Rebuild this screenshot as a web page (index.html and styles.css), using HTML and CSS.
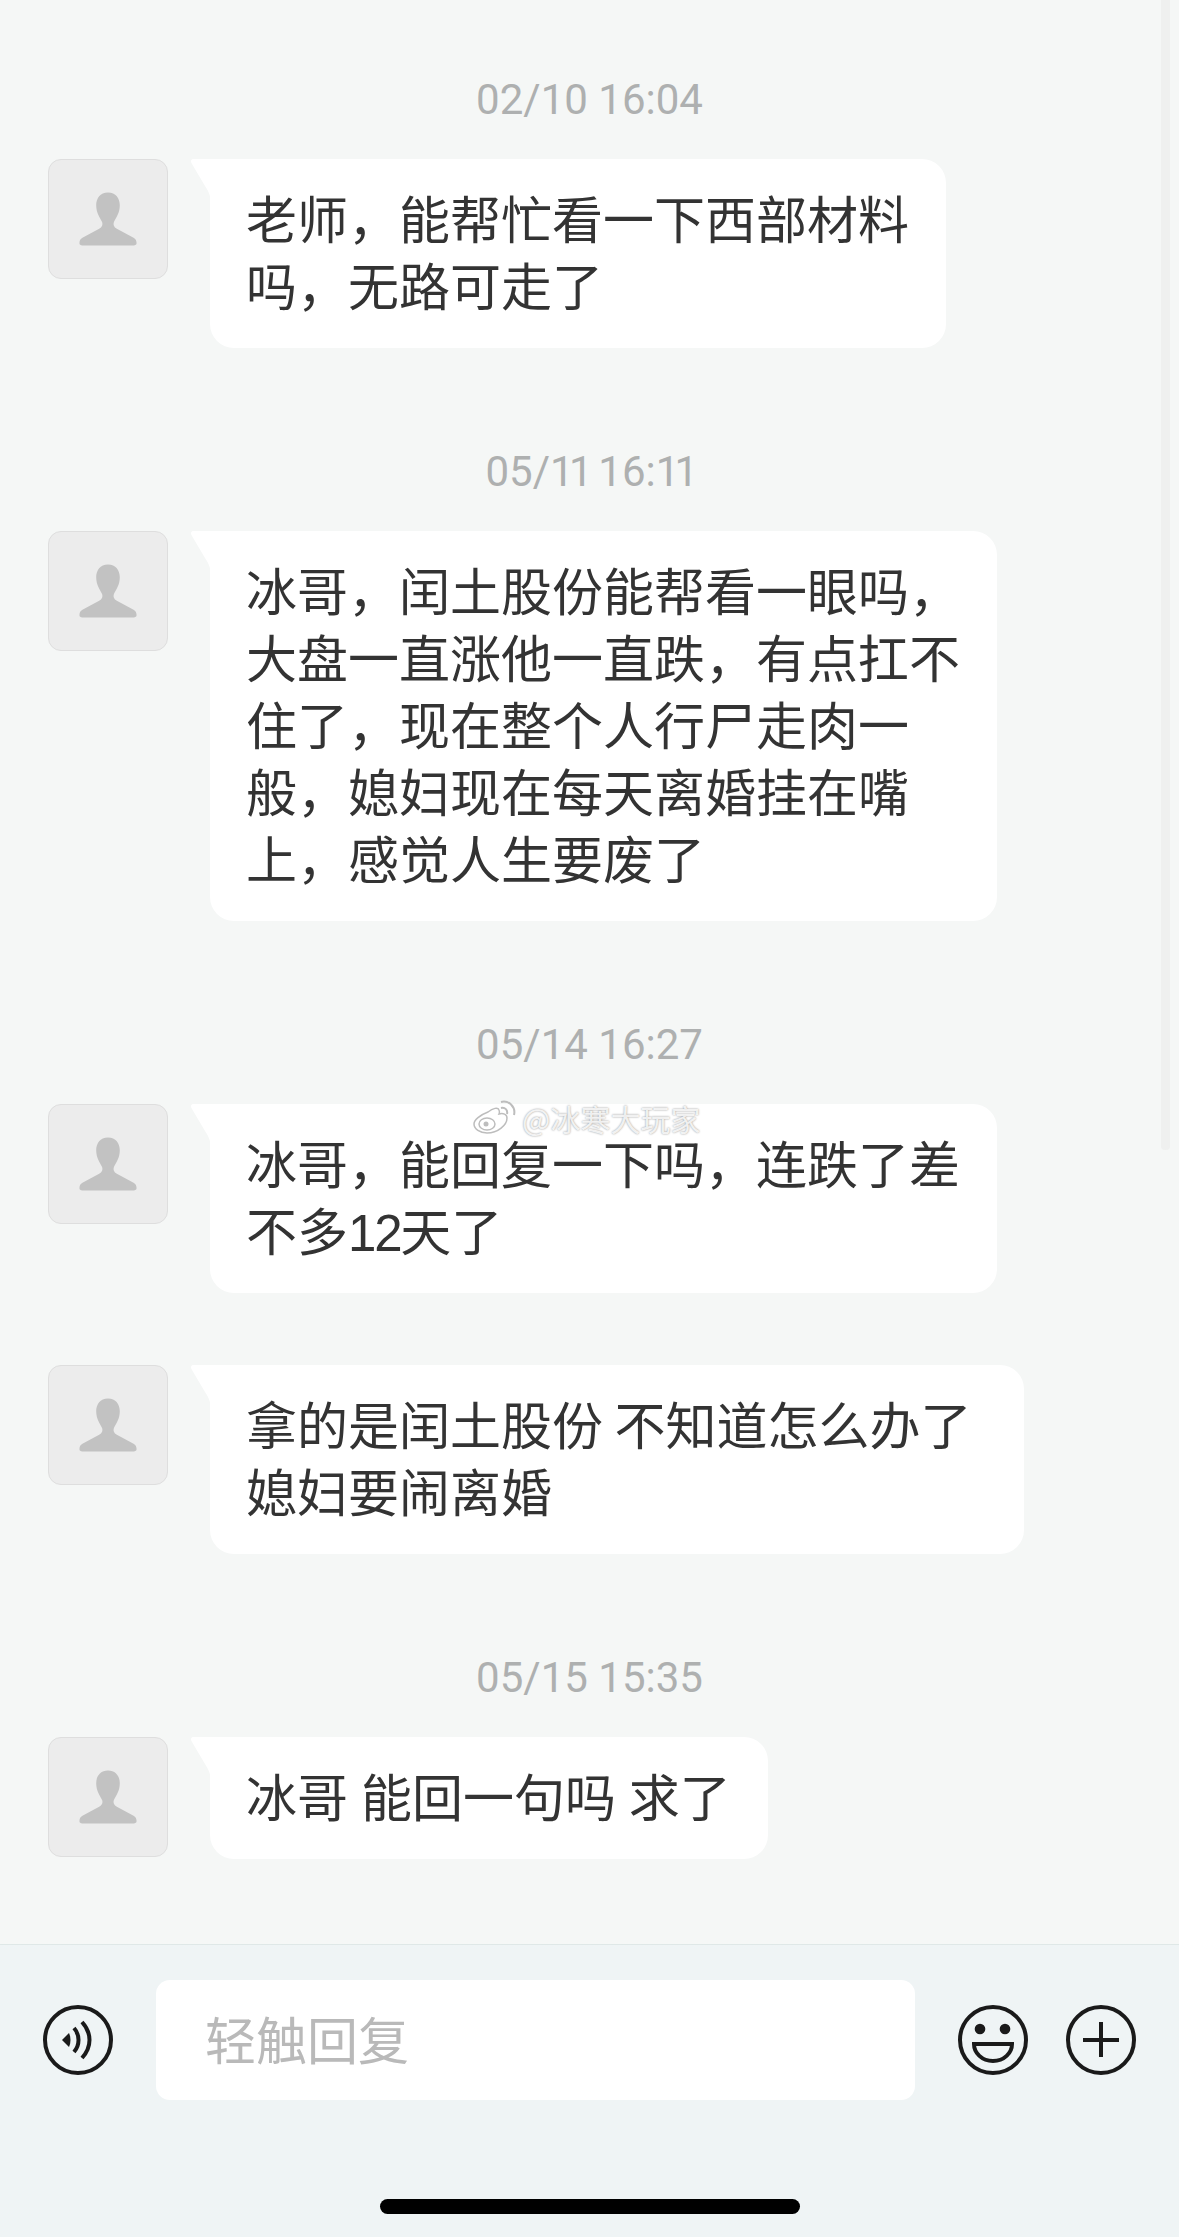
FILE: index.html
```html
<!DOCTYPE html>
<html lang="zh-CN">
<head>
<meta charset="UTF-8">
<meta name="viewport" content="width=device-width, initial-scale=1.0">
<title>私信</title>
<link rel="stylesheet" href="styles.css">
</head>
<body>

<svg class="defs" width="0" height="0">
    <symbol id="avatar" viewBox="0 0 120 120">
        <path fill="#c2c2c2" d="M60 33c-8 0-12 6-12 13 0 8 4 13 6 17 1 3 0 5-3 7l-17 9c-2 1-3 3-3 5v1c0 1 1 2 3 2h52c2 0 3-1 3-2v-1c0-2-1-4-3-5l-17-9c-3-2-4-4-3-7 2-4 6-9 6-17 0-7-4-13-12-13z"/>
    </symbol>
    <symbol id="tail" viewBox="0 0 20 50">
        <path fill="#fff" d="M20 0H3C0 0-1 2 1 5l13 22c4 6 6 11 6 18z"/>
    </symbol>
</svg>

<div class="chat">
    <div class="scrollbar"></div>

    <div class="time">02/10 16:04</div>
    <div class="row">
        <div class="avatar"><svg><use href="#avatar"/></svg></div>
        <div class="bubble"><svg class="tail"><use href="#tail"/></svg>老师，能帮忙看一下西部材料<br>吗，无路可走了</div>
    </div>

    <div class="time">05/<span class="tight">11</span> 16:<span class="tight">11</span></div>
    <div class="row">
        <div class="avatar"><svg><use href="#avatar"/></svg></div>
        <div class="bubble"><svg class="tail"><use href="#tail"/></svg>冰哥，闰土股份能帮看一眼吗，<br>大盘一直涨他一直跌，有点扛不<br>住了，现在整个人行尸走肉一<br>般，媳妇现在每天离婚挂在嘴<br>上，感觉人生要废了</div>
    </div>

    <div class="time">05/14 16:27</div>
    <div class="row">
        <div class="avatar"><svg><use href="#avatar"/></svg></div>
        <div class="bubble"><svg class="tail"><use href="#tail"/></svg>冰哥，能回复一下吗，连跌了差<br>不多<span class="num">12</span>天了</div>
    </div>
    <div class="row next">
        <div class="avatar"><svg><use href="#avatar"/></svg></div>
        <div class="bubble wide"><svg class="tail"><use href="#tail"/></svg>拿的是闰土股份 不知道怎么办了<br>媳妇要闹离婚</div>
    </div>

    <div class="time">05/15 15:35</div>
    <div class="row">
        <div class="avatar"><svg><use href="#avatar"/></svg></div>
        <div class="bubble spaced"><svg class="tail"><use href="#tail"/></svg>冰哥 能回一句吗 求了</div>
    </div>

    <!-- watermark sits over the third bubble -->
    <div class="watermark">
        <svg width="44" height="36" viewBox="0 0 44 36">
            <path fill="rgba(255,255,255,.75)" stroke="#bdbdbd" stroke-width="1.5" d="M15 12c5-4 10-5 11-2 1 2 0 4 0 4 4-1 8 0 8 4 0 7-9 15-20 15C7 33 1 29 1 24c0-4 6-9 14-12z"/>
            <ellipse cx="14" cy="24" rx="8" ry="6" fill="#fff" stroke="#bdbdbd" stroke-width="1.5"/>
            <circle cx="13" cy="24" r="2.5" fill="#bdbdbd"/>
            <path fill="none" stroke="#bdbdbd" stroke-width="2" d="M28 8c4-1 7 2 6 6M28 2c8-2 15 5 13 13"/>
        </svg>
        <span>@冰寒大玩家</span>
    </div>
</div>

<div class="footer">
    <div class="input-row">
        <svg class="icon" viewBox="0 0 70 70">
            <circle cx="35" cy="35" r="33"/>
            <path class="solid" d="M19 35l7-7c2 4 2 10 0 14z"/>
            <path d="M31 23c6 7 6 17 0 24M39 17c10 11 10 25 0 36"/>
        </svg>
        <div class="input">轻触回复</div>
        <svg class="icon" viewBox="0 0 70 70">
            <circle cx="35" cy="35" r="33"/>
            <circle class="solid" cx="22" cy="24" r="5.3"/>
            <circle class="solid" cx="47" cy="24" r="5.3"/>
            <path d="M16 39h38c0 9-8 17-19 17S16 48 16 39z"/>
        </svg>
        <svg class="icon plus" viewBox="0 0 70 70">
            <circle cx="35" cy="35" r="33"/>
            <path d="M35 17v35M17 35h36"/>
        </svg>
    </div>
    <div class="home-bar"></div>
</div>

</body>
</html>
```

FILE: styles.css
```css
* { box-sizing: border-box; }
body {
    margin: 0;
    height: 2237px;
    background: #f5f7f6;
    color: #333;
    font-family: "Noto Sans CJK SC", "Noto Sans", sans-serif;
    display: flex;
    flex-direction: column;
    overflow: hidden;
}
.defs { position: absolute; }

.chat {
    position: relative;
    flex: 1;
    min-height: 0;
    padding-top: 79px;
}
.scrollbar {
    position: absolute;
    top: 0;
    left: 1161px;
    width: 9px;
    height: 1150px;
    background: #eff0ef;
    border-radius: 0 0 4px 4px;
}

.time {
    height: 40px;
    line-height: 42px;
    margin-bottom: 40px;
    text-align: center;
    font-family: Roboto, sans-serif;
    font-size: 42px;
    color: #aeb0b0;
}
.time .tight { letter-spacing: -4.7px; }

.row {
    display: flex;
    align-items: flex-start;
    padding-left: 48px;
    margin-bottom: 103px;
}
.row:last-of-type { margin-bottom: 0; }
.row.next { margin-top: -31px; }

.avatar {
    width: 120px;
    height: 120px;
    flex-shrink: 0;
    background: #ececec;
    border: 1px solid #dedede;
    border-radius: 13px;
}
.avatar svg { display: block; width: 118px; height: 118px; }

.bubble {
    position: relative;
    margin-left: 42px;
    padding: 25px 37px 30px 36px;
    background: #fff;
    border-radius: 0 24px 24px 24px;
    font-size: 51px;
    line-height: 67px;
    white-space: nowrap;
}
.bubble.wide { padding-right: 53px; }
.bubble.spaced { word-spacing: 1.5px; }
.num {
    font-family: "Liberation Sans", sans-serif;
    letter-spacing: -2.2px;
    line-height: 0;
}
.tail {
    position: absolute;
    top: 0;
    left: -19px;
    width: 20px;
    height: 50px;
}

.watermark {
    position: absolute;
    top: 1096px;
    left: 473px;
    display: flex;
    align-items: center;
    gap: 5px;
    height: 44px;
    font-size: 30px;
    color: rgba(255, 255, 255, 0.85);
    text-shadow: 0 0 2px rgba(0, 0, 0, 0.45);
}

.footer {
    height: 293px;
    padding-top: 35px;
    background: #eff4f5;
    border-top: 1px solid #dfe8e7;
}
.input-row {
    display: flex;
    align-items: center;
    gap: 43px;
    padding: 0 43px;
}
.icon {
    width: 70px;
    height: 70px;
    flex-shrink: 0;
    fill: none;
    stroke: #1a1a1a;
    stroke-width: 4;
}
.icon .solid { fill: #1a1a1a; stroke: none; }
.icon.plus { margin-left: -5px; }
.input {
    flex: 1;
    height: 120px;
    line-height: 116px;
    padding-left: 49px;
    background: #fff;
    border-radius: 14px;
    font-size: 51px;
    color: #b9b9b9;
}
.home-bar {
    width: 420px;
    height: 15px;
    margin: 99px auto 0;
    background: #000;
    border-radius: 8px;
}
```
